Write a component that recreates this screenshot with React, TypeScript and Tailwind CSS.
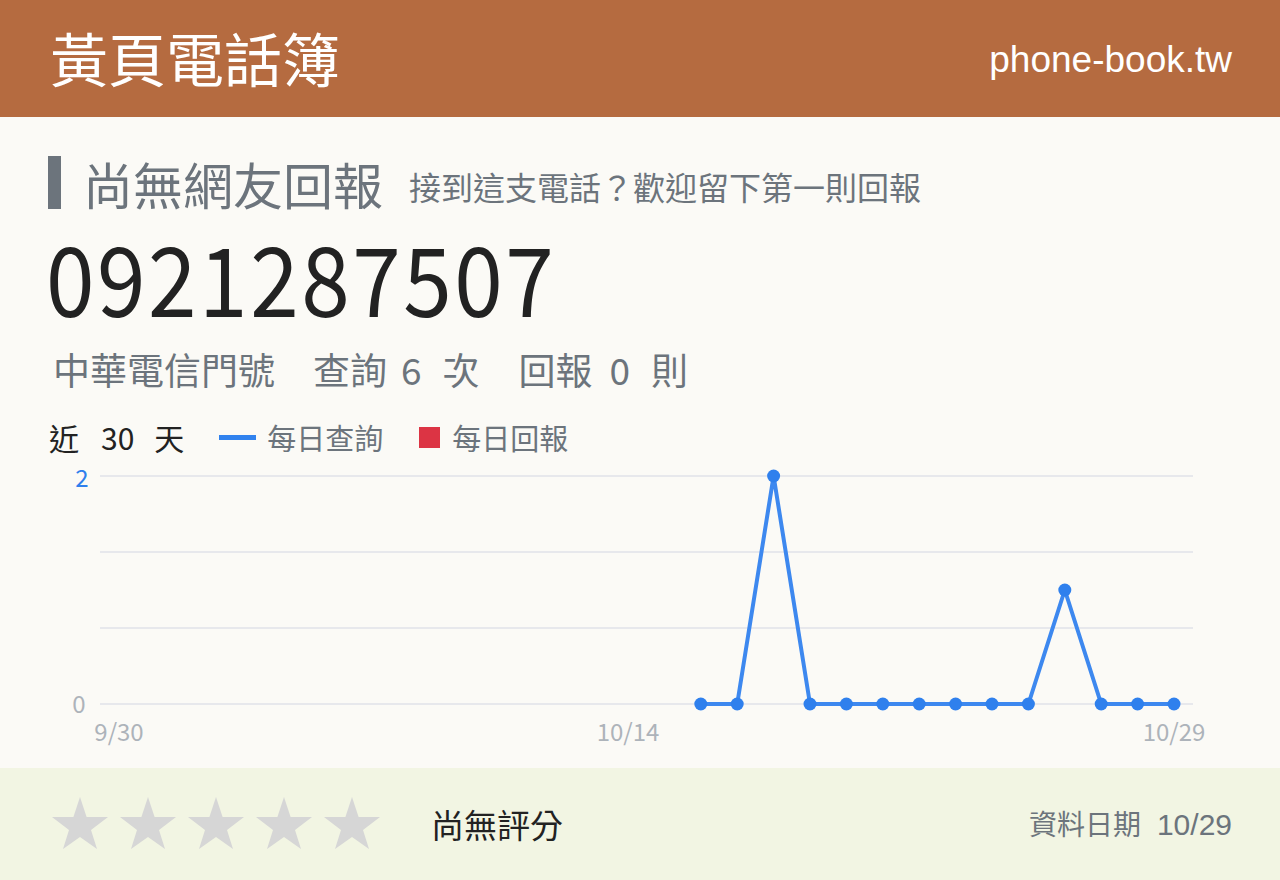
import React from "react";

const CJK = { fontFamily: '"Noto Sans CJK TC", "Noto Sans", sans-serif' };

const values: (number | null)[] = Array.from({ length: 30 }, (_, i) => {
  if (i < 16) return null;
  if (i === 18) return 2;
  if (i === 26) return 1;
  return 0;
});

function Chart() {
  const x0 = 118.4;
  const dx = 36.4;
  const yOf = (v: number) => 704 - v * 114;
  const pts = values
    .map((v, i) => (v === null ? null : [x0 + i * dx, yOf(v)]))
    .filter(Boolean) as number[][];
  const d = pts.map((p, i) => `${i === 0 ? "M" : "L"}${p[0]} ${p[1]}`).join(" ");
  return (
    <svg width="1280" height="290" viewBox="0 460 1280 290" className="block">
      {[476, 552, 628, 704].map((y) => (
        <line key={y} x1="100" x2="1193" y1={y} y2={y} stroke="#e7e8ec" strokeWidth="2" />
      ))}
      <text x="82" y="487" textAnchor="middle" fontSize="24" fill="#2f80ed" style={CJK}>2</text>
      <text x="79" y="713" textAnchor="middle" fontSize="24" fill="#adb3ba" style={CJK}>0</text>
      <text x="119" y="741" textAnchor="middle" fontSize="24" fill="#adb3ba" style={CJK}>9/30</text>
      <text x="628" y="741" textAnchor="middle" fontSize="24" fill="#adb3ba" style={CJK}>10/14</text>
      <text x="1174" y="741" textAnchor="middle" fontSize="24" fill="#adb3ba" style={CJK}>10/29</text>
      <path d={d} fill="none" stroke="#3d88ef" strokeWidth="4" strokeLinejoin="round" />
      {pts.map((p, i) => (
        <circle key={i} cx={p[0]} cy={p[1]} r="6.5" fill="#2f80ed" />
      ))}
    </svg>
  );
}

function Star() {
  return (
    <svg width="56" height="52" viewBox="0 0 56 52" className="block">
      <polygon
        points="28,0 34.6,20 56,20 39,33 45,52 28,40 11,52 17,33 0,20 21.4,20"
        fill="#d6d6d6"
      />
    </svg>
  );
}

export default function App() {
  return (
    <div className="w-[1280px] h-[880px] flex flex-col bg-[#fbfaf6]" style={CJK}>
      <header className="h-[117px] shrink-0 bg-[#b56b40] flex items-center justify-between pl-[50px] pr-[48px]">
        <div className="text-[58px] leading-none text-white -mt-[4px]">黃頁電話簿</div>
        <div
          className="text-[37px] leading-none text-white mt-[2px]"
          style={{ fontFamily: '"Liberation Sans", Arial, sans-serif' }}
        >
          phone-book.tw
        </div>
      </header>

      <main className="flex-1 flex flex-col">
        <div className="mt-[39px] h-[53px] pl-[48px] flex items-center">
          <div className="w-[13px] h-[53px] bg-[#6c747c]" />
          <div className="ml-[22px] text-[50px] leading-none text-[#6c747c]">尚無網友回報</div>
          <div className="ml-[26px] mt-[6px] text-[32px] leading-none text-[#6c747c]">
            接到這支電話？歡迎留下第一則回報
          </div>
        </div>

        <div className="mt-[19px] pl-[46px] h-[96px]">
          <div className="text-[96px] leading-[96px] text-[#222222] origin-left scale-x-[0.91] tracking-[2.8px]">
            0921287507
          </div>
        </div>

        <div className="mt-[27px] pl-[53px] h-[37px] flex items-center text-[37px] leading-none text-[#6c747c]">
          <span>中華電信門號</span>
          <span className="ml-[38px]">查詢</span>
          <span className="ml-[14px]">6</span>
          <span className="ml-[21px]">次</span>
          <span className="ml-[39px]">回報</span>
          <span className="ml-[17px]">0</span>
          <span className="ml-[21px]">則</span>
        </div>

        <div className="mt-[34px] pl-[49px] h-[30px] flex items-center">
          <span className="text-[30px] leading-none text-[#222222]">近</span>
          <span className="ml-[22px] text-[30px] leading-none text-[#222222]">30</span>
          <span className="ml-[20px] text-[30px] leading-none text-[#222222]">天</span>
          <span className="ml-[35px] w-[37px] h-[5px] bg-[#3182ee]" />
          <span className="ml-[11px] text-[29px] leading-none text-[#6c747c]">每日查詢</span>
          <span className="ml-[36px] w-[21px] h-[21px] bg-[#dc3444]" />
          <span className="ml-[12px] text-[29px] leading-none text-[#6c747c]">每日回報</span>
        </div>

        <div className="mt-[8px]">
          <Chart />
        </div>
      </main>

      <footer className="h-[112px] shrink-0 bg-[#f2f5e3] flex items-center pl-[52px] pr-[48px]">
        <div className="flex items-center gap-[12px] -mt-[2px]">
          <Star />
          <Star />
          <Star />
          <Star />
          <Star />
        </div>
        <div className="ml-[51px] text-[33px] leading-none text-[#222222]">尚無評分</div>
        <div className="ml-auto flex items-baseline text-[#6c747c]">
          <span className="text-[28px] leading-none">資料日期</span>
          <span
            className="ml-[16px] text-[30px] leading-none"
            style={{ fontFamily: '"Liberation Sans", Arial, sans-serif' }}
          >
            10/29
          </span>
        </div>
      </footer>
    </div>
  );
}
